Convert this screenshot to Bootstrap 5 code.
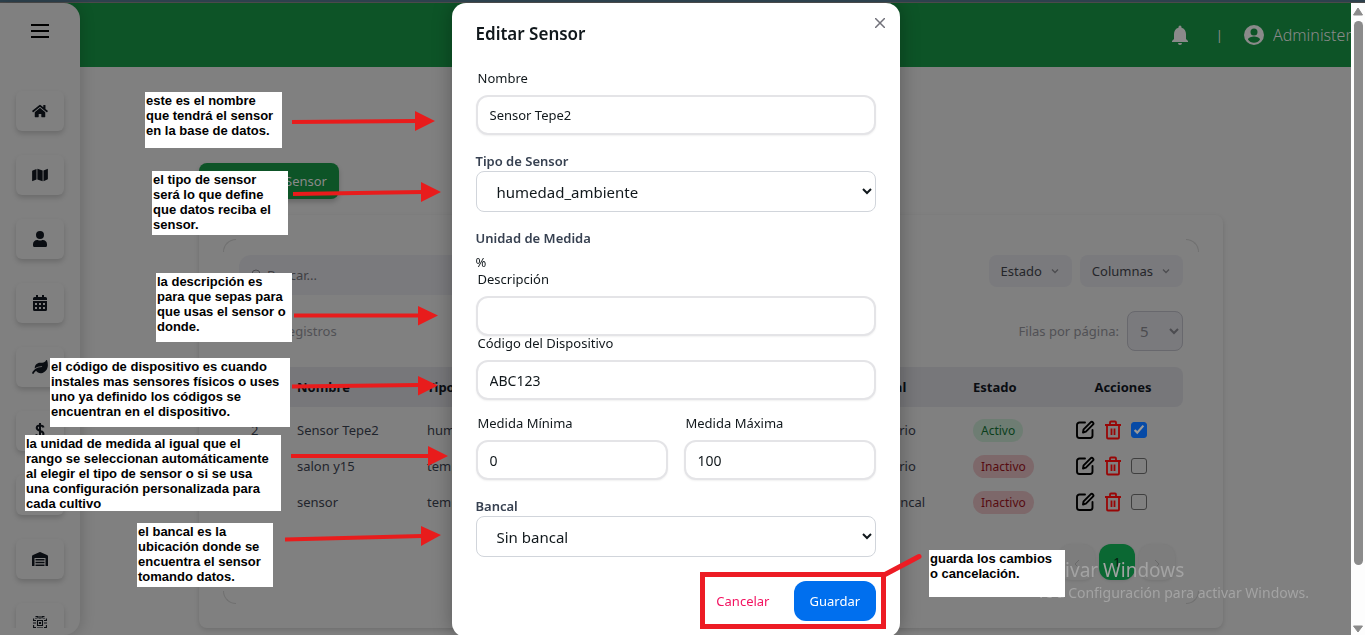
<!DOCTYPE html>
<html lang="es">
<head>
<meta charset="utf-8">
<meta name="viewport" content="width=device-width, initial-scale=1">
<title>Editar Sensor</title>
<link rel="stylesheet" href="https://cdn.jsdelivr.net/npm/bootstrap@5.3.0/dist/css/bootstrap.min.css">
<style>
  :root { --dim: #808080; --dim-2: #7a7a7d; --ink: #0a0d12; --mark-red: #e81c1c; }
  html, body { height: 100%; }
  body { font-family: "Noto Sans", "Open Sans", sans-serif; font-size: 13px; line-height: 20px; color: #11181c; background: var(--dim); overflow: hidden; }
  button, input, select { font-family: inherit; }
  .top-strip { height: 3px; background: #2d414d; border-bottom: 1px solid #4a4a4a; }
  .app-shell { height: calc(100vh - 3px); }

  .side-rail { width: 80px; background: var(--dim); border-radius: 0 16px 16px 0; box-shadow: 2px 0 14px rgba(0,0,0,.16); z-index: 2; overflow: hidden; }
  .rail-toggle { height: 56px; width: 48px; }
  .rail-link { width: 48px; height: 40px; border-radius: 6px; color: var(--ink); background: var(--dim); box-shadow: 0 3px 5px rgba(0,0,0,.16); flex-shrink: 0; }
  .rail-list { gap: 24px; margin: 24px 0 7px; padding: 8px 8px 0; overflow: hidden; min-height: 0; }

  .app-header { height: 64px; background: #0d5427; color: #8a8a8a; margin-left: -80px; gap: 0 20px; }
  .user-name { font-size: 16px; font-weight: 300; width: 78px; overflow: hidden; }
  .page-area { padding: 96px 128px 0 119px; }
  .btn-new { background: #0d5427; color: #8a8a8a; font-size: 13px; line-height: 20px; height: 36px; width: 140px; border: 0; border-radius: 8px; box-shadow: 0 3px 5px rgba(0,0,0,.2); padding: 0 12px; text-align: right; }
  .outer-panel { margin-top: 16px; padding: 24px; height: 413px; border-radius: 8px; box-shadow: 0 2px 5px rgba(0,0,0,.14); }
  .inner-panel { position: relative; padding: 16px; height: 365px; border-radius: 14px; }
  .corner { position: absolute; width: 13px; height: 13px; border: 0 solid #707070; }
  .corner-tl { left: 0; top: 0; border-width: 1px 0 0 1px; border-radius: 14px 0 0 0; }
  .corner-tr { right: 0; top: 0; border-width: 1px 1px 0 0; border-radius: 0 14px 0 0; }
  .corner-bl { left: 0; bottom: 0; border-width: 0 0 1px 1px; border-radius: 0 0 0 14px; }
  .corner-br { right: 0; bottom: 0; border-width: 0 1px 1px 0; border-radius: 0 0 14px 0; }
  .search-box { width: 420px; height: 40px; background: var(--dim-2); border-radius: 12px; padding: 0 12px; color: #4a4a4e; }
  .search-box input { background: none; border: 0; color: inherit; outline: 0; padding: 0; }
  .search-box input::placeholder { color: #3f3f43; opacity: 1; }
  .btn-filter { height: 32px; background: var(--dim-2); border: 0; border-radius: 8px; color: #25262a; font-size: 13px; line-height: 20px; padding: 0 12px; gap: 8px; }
  .btn-filter svg { color: #4c4c50; }
  .muted-text { color: #515155; }
  .rows-select { width: 56px; height: 40px; border: 1px solid #68686d; border-radius: 8px; background: var(--dim-2); color: #4c4c50; font-size: 15px; padding: 0 8px; }
  .sensor-table { table-layout: fixed; width: 100%; border-collapse: collapse; color: #1f242c; }
  .sensor-table th { height: 40px; padding: 0 12px; background: #77777a; font-weight: 700; color: var(--ink); white-space: nowrap; }
  .sensor-table th:first-child { border-radius: 8px 0 0 8px; }
  .sensor-table th:last-child { border-radius: 0 8px 8px 0; }
  .sensor-table td { height: 36px; padding: 0 12px; white-space: nowrap; }
  .sensor-table tbody::before { content: ""; display: block; height: 5px; }
  .state-pill { display: inline-block; font-size: 12px; line-height: 16px; padding: 4px 8px 3px; border-radius: 12px; }
  .state-on { background: #6e7d73; color: #0b3f1c; }
  .state-off { background: #7d686a; color: #560b10; }
  .row-check { appearance: none; width: 16px; height: 16px; border: 1px solid #3f3f3f; border-radius: 3px; margin: 0; }
  .row-check:checked { border-color: #064aa6; background: #064aa6 url("data:image/svg+xml,%3Csvg xmlns='http://www.w3.org/2000/svg' viewBox='0 0 16 16'%3E%3Cpath d='M3 8l3 3 7-8' fill='none' stroke='%23999' stroke-width='2.5'/%3E%3C/svg%3E") center / 14px; }
  .page-btn { width: 36px; height: 36px; border: 0; border-radius: 12px; background: #7d7d7d; color: #6a6a6a; box-shadow: 0 1px 3px rgba(0,0,0,.1); padding: 0; }
  .page-btn.current { background: #0b6833; color: #06170d; }

  .scroll-track { width: 14px; background: #fdfdfd; }
  .scroll-thumb { width: 9px; background: #8b8b8b; border-radius: 5px; height: 86%; }

  .edit-modal { top: 3px; right: 14px; width: auto; overflow: hidden; pointer-events: none; }
  .edit-modal .modal-dialog { max-width: 448px; margin: 0 auto; }
  .edit-modal .modal-content { border: 0; border-radius: 14px; box-shadow: 0 0 20px rgba(0,0,0,.3); color: #11181c; }
  .edit-modal .modal-header { border: 0; padding: 16px 24px 14px; }
  .edit-modal .modal-title { font-size: 17px; line-height: 30px; font-weight: 600; }
  .edit-modal .modal-body { padding: 8px 24px 24px; }
  .edit-modal .modal-footer { border: 0; padding: 0 24px 16px; gap: 8px; }
  .edit-modal .modal-footer > * { margin: 0; }
  .btn-x { position: absolute; right: 12px; top: 12px; width: 16px; height: 16px; border: 0; padding: 0; background: none; color: #71717a; display: flex; align-items: center; justify-content: center; }
  .soft-label { display: block; line-height: 14px; margin: 0 2px 10px; }
  .strong-label { display: block; line-height: 20px; font-weight: 600; color: #374151; }
  .soft-input { height: 40px; border: 2px solid #e4e4e7; border-radius: 12px; font-size: 13px; line-height: 20px; padding: 0 12px; color: #11181c; box-shadow: 0 1px 2px rgba(0,0,0,.06); }
  .soft-input.digits { font-size: 14px; }
  .plain-select { display: block; width: 100%; height: 41px; border: 1px solid #d1d5db; border-radius: 8px; background: #fff; font-size: 15px; padding: 0 0 0 16px; color: #11181c; }
  .btn-flat { height: 40px; border: 0; border-radius: 12px; font-size: 13px; line-height: 20px; padding: 0 16px; }
  .btn-flat.cancel { color: #f31260; }
  .btn-flat.save { background: #006fee; color: #fff; width: 82px; }

  .note { position: absolute; z-index: 1100; background: #fff; color: #000; font: bold 13px/15px "Liberation Sans", Arial, sans-serif; padding: 1px; white-space: nowrap; }
  .mark-layer { position: absolute; left: 0; top: 0; z-index: 1090; pointer-events: none; }
  .os-notice { position: absolute; z-index: 1080; right: 52px; bottom: 32px; color: #a3a3a3; width: 276px; font-size: 14px; white-space: nowrap; pointer-events: none; }
  .os-notice strong { display: block; font-size: 19px; line-height: 26px; font-weight: 400; }
</style>
</head>
<body>
<svg width="0" height="0" class="position-absolute">
  <symbol id="i-edit" viewBox="0 0 20 20"><path d="M10 2.500H4.500A2.500 2.500 0 0 0 2 5v10.500A2.500 2.500 0 0 0 4.500 18H15a2.500 2.500 0 0 0 2.500-2.500V10M8 12.500l.6-3.200 7-7a1.500 1.500 0 0 1 2.300 2.300l-7 7z" fill="none" stroke="currentColor" stroke-width="1.900" stroke-linecap="round" stroke-linejoin="round"/></symbol>
  <symbol id="i-trash" viewBox="0 0 20 20"><path d="M2 5h16M4 5V17.500a1 1 0 0 0 1 1h10a1 1 0 0 0 1-1V5M7 5V2.500A1 1 0 0 1 8 1.500h4a1 1 0 0 1 1 1V5M8.500 8.500v6.500M11.500 8.500v6.500" fill="none" stroke="currentColor" stroke-width="1.800"/></symbol>
  <symbol id="i-down" viewBox="0 0 10 10"><path d="M2 3.500l3 3 3-3" fill="none" stroke="currentColor" stroke-width="1.300"/></symbol>
</svg>

<div class="top-strip"></div>
<div class="app-shell d-flex">
  <nav class="side-rail d-flex flex-column align-items-center flex-shrink-0" aria-label="Principal">
    <button class="rail-toggle btn p-0 border-0 flex-shrink-0 d-flex align-items-center justify-content-center" aria-label="Menú"><svg width="18" height="14" viewBox="0 0 18 14"><path d="M0 1h18M0 7h18M0 13h18" stroke="#000" stroke-width="2"/></svg></button>
    <div class="rail-list d-flex flex-column">
      <a href="#" class="rail-link d-flex align-items-center justify-content-center" aria-label="Inicio"><svg width="16" height="14" viewBox="0 0 576 512" fill="currentColor"><path d="M280 148L96 300v164a16 16 0 0 0 16 16h112a16 16 0 0 0 16-16v-96h96v96a16 16 0 0 0 16 16h112a16 16 0 0 0 16-16V300L296 148a12 12 0 0 0-16 0zM571 251l-83-69V44a12 12 0 0 0-12-12h-56a12 12 0 0 0-12 12v72l-90-74a48 48 0 0 0-61 0L4 251a12 12 0 0 0-1 17l25 31a12 12 0 0 0 17 2L280 107a12 12 0 0 1 16 0l235 194a12 12 0 0 0 17-2l25-31a12 12 0 0 0-2-17z"/></svg></a>
      <a href="#" class="rail-link d-flex align-items-center justify-content-center" aria-label="Mapa"><svg width="16" height="14" viewBox="0 0 576 512" fill="currentColor"><path d="M0 118v346c0 11 11 19 22 15l138-61V32L20 88a32 32 0 0 0-20 30zM192 418l192 64V94L192 30zM554 33L416 94v386l140-56a32 32 0 0 0 20-30V48c0-11-11-19-22-15z"/></svg></a>
      <a href="#" class="rail-link d-flex align-items-center justify-content-center" aria-label="Usuarios"><svg width="14" height="16" viewBox="0 0 448 512" fill="currentColor"><path d="M224 256a128 128 0 1 0 0-256 128 128 0 0 0 0 256zm90 32h-17a174 174 0 0 1-146 0h-17A134 134 0 0 0 0 422v42a48 48 0 0 0 48 48h352a48 48 0 0 0 48-48v-42a134 134 0 0 0-134-134z"/></svg></a>
      <a href="#" class="rail-link d-flex align-items-center justify-content-center" aria-label="Calendario"><svg width="14" height="16" viewBox="0 0 14 16" fill="currentColor"><path fill-rule="evenodd" d="M3 0h2v2h4V0h2v2h1.500A1.500 1.500 0 0 1 14 3.500V5H0V3.500A1.500 1.500 0 0 1 1.500 2H3zM0 6h14v8.500a1.500 1.500 0 0 1-1.500 1.500h-11A1.500 1.500 0 0 1 0 14.500zM2 8v2h2V8zm4 0v2h2V8zm4 0v2h2V8zM2 12v2h2v-2zm4 0v2h2v-2zm4 0v2h2v-2z"/></svg></a>
      <a href="#" class="rail-link d-flex align-items-center justify-content-center" aria-label="Cultivos"><svg width="16" height="14" viewBox="0 0 576 512" fill="currentColor"><path d="M547 10c-8-16-26-13-33 2-27 50-83 84-146 84h-80C182 96 96 182 96 288c0 7 1 14 2 21 67-60 160-85 254-85a16 16 0 0 1 0 32C146 256 40 382 2 467a32 32 0 0 0 58 26c2-5 27-58 84-101 36 54 107 99 190 90 138-10 242-141 242-298 0-62-10-124-29-174z"/></svg></a>
      <a href="#" class="rail-link d-flex align-items-center justify-content-center" aria-label="Finanzas"><svg width="10" height="16" viewBox="0 0 10 16"><path d="M5 0v16M8.500 4.500C8 2 2 1.500 1.700 4.800 1.600 8.500 8.600 7 8.500 11c-.3 3.500-6.500 3-7.500.3" fill="none" stroke="currentColor" stroke-width="2"/></svg></a>
      <a href="#" class="rail-link d-flex align-items-center justify-content-center" aria-label="Plagas"><svg width="14" height="14" viewBox="0 0 14 14"><circle cx="7" cy="7" r="6" fill="currentColor"/></svg></a>
      <a href="#" class="rail-link d-flex align-items-center justify-content-center" aria-label="Bodega"><svg width="16" height="14" viewBox="0 0 16 14" fill="currentColor"><path d="M0 14V4.500Q0 3.300 1 3L7.300.2a2 2 0 0 1 1.400 0L15 3q1 .3 1 1.500V14h-2.500V6h-11v8zM3.500 7h9v1.500h-9zm0 2.700h9v1.500h-9zm0 2.700h9V14h-9z"/></svg></a>
      <a href="#" class="rail-link d-flex align-items-center justify-content-center" aria-label="Sensores"><svg width="14" height="14" viewBox="0 0 14 14" fill="none" stroke="currentColor" stroke-width="1.100"><path d="M4.500 4.500h5v5h-5zM6.500 6.500h1v1h-1zM2.500.6H5v2M.6 2.500v2.300M0 4.500h3M7 0v3M9 2.500V.6h2.500M13.400 2.500v2H11M14 7h-3M0 7h3M.6 9v2.500H3M2.500 13.400H5V11M7 11v3M9 11v2.400h2.500M13.400 9v2.500H11M2.500 2.500h1M10.500 2.500h1"/></svg></a>
    </div>
  </nav>

  <div class="flex-grow-1 d-flex flex-column">
    <header class="app-header d-flex align-items-center justify-content-end">
      <svg class="me-2" width="16" height="20" viewBox="0 0 16 20" fill="currentColor" role="img" aria-label="Notificaciones"><path d="M8 20a2 2 0 0 0 2-2H6a2 2 0 0 0 2 2zm6-6V9c0-3-1.600-5.600-4.500-6.300V2a1.500 1.500 0 0 0-3 0v.7C3.600 3.400 2 6 2 9v5l-2 2v1h16v-1z"/></svg>
      <span>|</span>
      <span class="d-flex align-items-center gap-2">
      <svg width="22" height="22" viewBox="0 0 22 22" role="img" aria-label="Cuenta"><path fill="currentColor" fill-rule="evenodd" d="M11 1a10 10 0 1 0 0 20 10 10 0 0 0 0-20zm0 3.500a3.500 3.500 0 1 1 0 7 3.500 3.500 0 0 1 0-7zm0 14.200a7.200 7.200 0 0 1-6-3.200c0-2 4-3 6-3s6 1 6 3a7.200 7.200 0 0 1-6 3.200z"/></svg>
      <span class="user-name">Administer</span>
      </span>
    </header>

    <main class="page-area">
      <button class="btn btn-new">Registrar Sensor</button>
      <section class="outer-panel">
        <div class="inner-panel">
          <span class="corner corner-tl"></span><span class="corner corner-tr"></span><span class="corner corner-bl"></span><span class="corner corner-br"></span>
          <div class="d-flex align-items-start justify-content-between">
            <label class="search-box d-flex align-items-center gap-1">
              <svg width="12" height="12" viewBox="0 0 12 12" fill="none" stroke="currentColor"><circle cx="5" cy="5" r="4"/><path d="M8 8l4 4"/></svg>
              <input type="text" placeholder="Buscar..." aria-label="Buscar">
            </label>
            <div class="d-flex gap-2">
              <button class="btn btn-filter d-flex align-items-center">Estado <svg width="10" height="10"><use href="#i-down"/></svg></button>
              <button class="btn btn-filter d-flex align-items-center">Columnas <svg width="10" height="10"><use href="#i-down"/></svg></button>
            </div>
          </div>
          <div class="d-flex align-items-center justify-content-between mt-3 muted-text">
            <span>Total 3 registros</span>
            <div class="d-flex align-items-center gap-2"><label for="rows">Filas por página:</label>
              <select id="rows" class="rows-select"><option>5</option><option>10</option></select></div>
          </div>
          <table class="sensor-table mt-3">
            <colgroup><col style="width:46px"><col style="width:130px"><col style="width:150px"><col><col style="width:110px"><col style="width:102px"><col style="width:120px"></colgroup>
            <thead><tr><th>ID</th><th>Nombre</th><th>Tipo de Sensor</th><th>Descripción</th><th>Bancal</th><th>Estado</th><th class="text-center">Acciones</th></tr></thead>
            <tbody>
              <tr><td>2</td><td>Sensor Tepe2</td><td>humedad_ambiente</td><td></td><td>primario</td><td><span class="state-pill state-on">Activo</span></td><td><div class="d-flex align-items-center gap-2"><svg width="20" height="20" color="#000"><use href="#i-edit"/></svg><svg width="20" height="20" color="#980606"><use href="#i-trash"/></svg><input class="row-check" type="checkbox" aria-label="Activar Sensor Tepe2" checked></div></td></tr>
              <tr><td>3</td><td>salon y15</td><td>temperatura</td><td></td><td>primario</td><td><span class="state-pill state-off">Inactivo</span></td><td><div class="d-flex align-items-center gap-2"><svg width="20" height="20" color="#000"><use href="#i-edit"/></svg><svg width="20" height="20" color="#980606"><use href="#i-trash"/></svg><input class="row-check" type="checkbox" aria-label="Activar salon y15"></div></td></tr>
              <tr><td>4</td><td>sensor</td><td>temperatura</td><td></td><td>Sin bancal</td><td><span class="state-pill state-off">Inactivo</span></td><td><div class="d-flex align-items-center gap-2"><svg width="20" height="20" color="#000"><use href="#i-edit"/></svg><svg width="20" height="20" color="#980606"><use href="#i-trash"/></svg><input class="row-check" type="checkbox" aria-label="Activar sensor"></div></td></tr>
            </tbody>
          </table>
          <div class="d-flex justify-content-end gap-1 mt-4 pe-2">
            <button class="page-btn" aria-label="Anterior"><svg width="10" height="10" viewBox="0 0 10 10" fill="none" stroke="currentColor"><path d="M7 1L3 5l4 4"/></svg></button>
            <button class="page-btn current">1</button>
            <button class="page-btn" aria-label="Siguiente"><svg width="10" height="10" viewBox="0 0 10 10" fill="none" stroke="currentColor"><path d="M3 1l4 4-4 4"/></svg></button>
          </div>
        </div>
      </section>
    </main>
  </div>

  <div class="scroll-track d-flex flex-column align-items-center flex-shrink-0" aria-hidden="true">
    <svg width="14" height="18" viewBox="0 0 14 18" class="flex-shrink-0"><path d="M7 5l4.500 7h-9z" fill="#8b8b8b" stroke="#8b8b8b" stroke-linejoin="round"/></svg>
    <div class="scroll-thumb"></div>
    <svg width="14" height="12" viewBox="0 0 14 12" class="flex-shrink-0 mt-auto"><path d="M7 9L2.500 3h9z" fill="#8b8b8b" stroke="#8b8b8b" stroke-linejoin="round"/></svg>
  </div>
</div>

<div class="modal edit-modal d-block" role="dialog" aria-labelledby="dlg-title">
  <div class="modal-dialog">
    <form class="modal-content">
      <div class="modal-header">
        <h1 class="modal-title" id="dlg-title">Editar Sensor</h1>
        <button type="button" class="btn-x" aria-label="Cerrar"><svg width="10" height="10" viewBox="0 0 10 10"><path d="M0 0l10 10M10 0L0 10" stroke="currentColor" stroke-width="1.500"/></svg></button>
      </div>
      <div class="modal-body">
        <label class="soft-label" for="nombre">Nombre</label>
        <input class="form-control soft-input mb-3" id="nombre" type="text" value="Sensor Tepe2">
        <label class="strong-label" for="tipo">Tipo de Sensor</label>
        <select class="plain-select mb-3" id="tipo"><option>humedad_ambiente</option></select>
        <div class="strong-label mb-1">Unidad de Medida</div>
        <div>%</div>
        <label class="soft-label" for="desc">Descripción</label>
        <input class="form-control soft-input" id="desc" type="text">
        <label class="soft-label" for="codigo">Código del Dispositivo</label>
        <input class="form-control soft-input digits mb-3" id="codigo" type="text" value="ABC123">
        <div class="row gx-3 mb-3">
          <div class="col-6"><label class="soft-label" for="min">Medida Mínima</label><input class="form-control soft-input digits" id="min" type="text" value="0"></div>
          <div class="col-6"><label class="soft-label" for="max">Medida Máxima</label><input class="form-control soft-input digits" id="max" type="text" value="100"></div>
        </div>
        <label class="strong-label" for="bancal">Bancal</label>
        <select class="plain-select" id="bancal"><option>Sin bancal</option></select>
      </div>
      <div class="modal-footer">
        <button type="button" class="btn btn-flat cancel">Cancelar</button>
        <button type="submit" class="btn btn-flat save">Guardar</button>
      </div>
    </form>
  </div>
</div>

<div class="os-notice"><strong>Activar Windows</strong>Ve a Configuración para activar Windows.</div>

<svg class="mark-layer" width="1365" height="635" viewBox="0 0 1365 635" aria-hidden="true">
  <g stroke="#e81c1c" stroke-width="4"><path d="M292 122L416 121M293 194L422 192M294 315.500H419M292 386.500L419 385M291 456H429M285 539.500L422 536"/></g>
  <g fill="#e81c1c"><path d="M415 111l20 10-20 10zM421 182l20 10-20 10zM418 306l20 9.500-20 10zM418 376l20 9.500-20 10zM428 446l20 10-20 10zM421 526l20 9-20 11z"/></g>
  <g fill="none" stroke="#ed1c24" stroke-width="5"><path d="M702.500 574.500h181v52h-181z"/><path d="M884 575L919 556.500" stroke-linecap="round"/></g>
</svg>

<div class="note" style="left:145px;top:92px;width:137px;height:56px">este es el nombre<br>que tendrá el sensor<br>en la base de datos.</div>
<div class="note" style="left:152px;top:171px;width:136px;height:64px">el tipo de sensor<br>será lo que define<br>que datos reciba el<br>sensor.</div>
<div class="note" style="left:156px;top:273px;width:136px;height:69px">la descripción es<br>para que sepas para<br>que usas el sensor o<br>donde.</div>
<div class="note" style="left:50px;top:358px;width:240px;height:69px">el código de dispositivo es cuando<br>instales mas sensores físicos o uses<br>uno ya definido los códigos se<br>encuentran en el dispositivo.</div>
<div class="note" style="left:25px;top:435px;width:256px;height:76px">la unidad de medida al igual que el<br>rango se seleccionan automáticamente<br>al elegir el tipo de sensor o si se usa<br>una configuración personalizada para<br>cada cultivo</div>
<div class="note" style="left:137px;top:523px;width:136px;height:64px">el bancal es la<br>ubicación donde se<br>encuentra el sensor<br>tomando datos.</div>
<div class="note" style="left:929px;top:550px;width:136px;height:47px">guarda los cambios<br>o cancelación.</div>
<script src="https://cdn.jsdelivr.net/npm/bootstrap@5.3.0/dist/js/bootstrap.bundle.min.js"></script>
</body>
</html>
